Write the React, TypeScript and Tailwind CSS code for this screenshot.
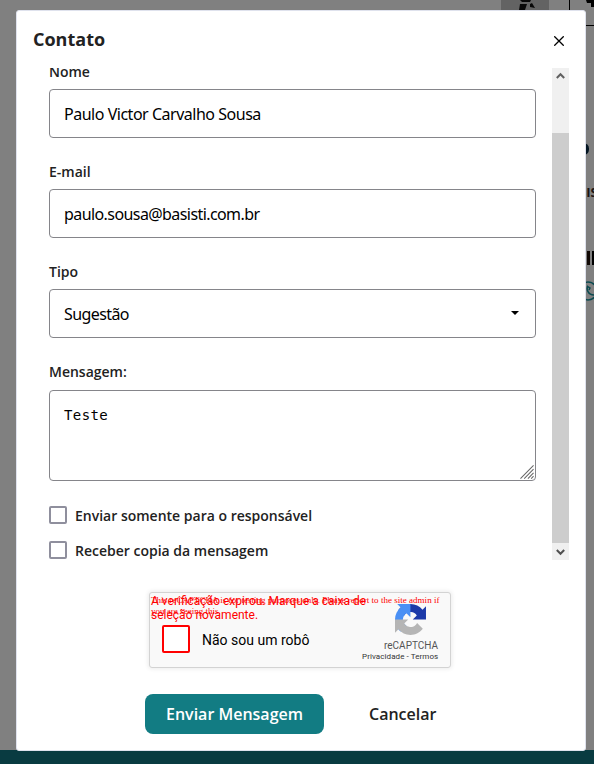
import React from "react";

function Backdrop() {
  return (
    <div className="absolute inset-0 bg-[#808080]">
      <svg className="absolute top-0 left-[501px]" width="93" height="27" viewBox="0 0 93 27">
        <rect width="48" height="12" fill="#636363" />
        <path d="M19 0H30L29 2H21Z M19 4L26 4L24 10H18Z M29 4L31 3L34 8L29 7Z" fill="#080808" />
        <path d="M68 0H69V26H68Z M69 25H93V26H69Z M85 0H93V7H90V3H86Z" fill="#000" />
      </svg>
      <div className="absolute top-[143px] left-[578px] h-[12px] w-[11px] rounded-full border-[3px] border-[#031522]" />
      <span className="absolute top-[183px] left-[579px] font-['Open_Sans',sans-serif] text-[13px] leading-[18px] font-bold text-[#1b1414]">SIS</span>
      <div className="absolute top-[251px] left-[587px] h-[14px] w-[3px] bg-[#100804]" />
      <div className="absolute top-[251px] left-[592px] h-[14px] w-[2px] bg-black" />
      <svg className="absolute top-[281px] left-[580px]" width="14" height="21" viewBox="0 0 14 21" fill="none" stroke="#0b4a50" strokeWidth="1.5">
        <circle cx="8" cy="10" r="9" />
        <path d="M8 5C6 8 8 14 14 14M7 5L10 7L9 9" />
      </svg>
      <div className="absolute inset-x-0 top-[750px] bottom-0 bg-[#093b41]" />
    </div>
  );
}

function Label({ children }: { children: React.ReactNode }) {
  return <div className="h-5 text-[14px] leading-5 font-semibold text-[#222]">{children}</div>;
}

function Field({ label, value, text, select }: { label: string; value: string; text: string; select?: boolean }) {
  return (
    <div className="h-[100px]">
      <Label>{label}</Label>
      <div className="mt-[7px] flex h-[49px] items-center justify-between rounded-[4px] border border-[#85858a] bg-white pr-4 pl-[14px] font-['Noto_Sans',sans-serif] text-[16px] leading-6 text-black">
        <span className={text}>{value}</span>
        {select && (
          <svg width="8" height="4" viewBox="0 0 8 4" className="mb-px">
            <path d="M0 0H8L4 4Z" fill="#000" />
          </svg>
        )}
      </div>
    </div>
  );
}

function Check({ label }: { label: string }) {
  return (
    <div className="flex h-[35px] items-center">
      <span className="h-[18px] w-[18px] rounded-[2px] border-2 border-[#8f8f9d] bg-white" />
      <span className="mt-[3px] ml-2 text-[14px] leading-5 font-semibold text-[#222]">{label}</span>
    </div>
  );
}

function RecaptchaLogo() {
  return (
    <svg width="31" height="31" viewBox="0 0 64 64">
      <path d="M64 31.955a33 33 0 0 0-.037-1.374V4.687l-7.159 7.159C50.945 4.674 42.033.093 32.05.093c-10.389 0-19.618 4.96-25.458 12.64l11.734 11.857a15.55 15.55 0 0 1 4.754-5.334c2.05-1.6 4.952-2.906 8.968-2.906.485 0 .86.057 1.135.163 4.976.393 9.288 3.14 11.828 7.124l-8.307 8.307L64 31.955" fill="#1c3aa9" />
      <path d="M31.862.094a33 33 0 0 0-1.373.037H4.594l7.159 7.159C4.58 13.149 0 22.061 0 32.045c0 10.388 4.96 19.618 12.64 25.458l11.857-11.734a15.55 15.55 0 0 1-5.334-4.754c-1.6-2.05-2.906-4.952-2.906-8.968 0-.485.057-.86.163-1.135.393-4.976 3.14-9.288 7.124-11.828l8.307 8.307L31.862.094" fill="#4a90f5" />
      <path d="M.001 32.045c.001.46.014.918.037 1.373v25.895l7.159-7.159c5.859 7.173 14.771 11.753 24.755 11.753 10.388 0 19.618-4.96 25.458-12.64L45.676 39.41a15.55 15.55 0 0 1-4.754 5.334c-2.05 1.6-4.952 2.906-8.968 2.906-.485 0-.86-.057-1.135-.163-4.976-.393-9.288-3.14-11.828-7.124l8.307-8.307L.001 32.045" fill="#b5b5b5" />
    </svg>
  );
}

function Captcha() {
  return (
    <div className="relative mt-[32px] ml-[132px] flex h-[76px] w-[302px] shrink-0 rounded-[3px] border border-[#d3d3d3] bg-[#f9f9f9] font-['Roboto',sans-serif] shadow-[0_0_4px_1px_rgba(0,0,0,0.08)]">
      <div className="mt-[32px] ml-[12px] h-7 w-7 rounded-[2px] border-2 border-[#f00] bg-white" />
      <span className="mt-[38px] ml-[12px] text-[14px] leading-[18px] whitespace-nowrap text-black">Não sou um robô</span>
      <div className="absolute top-[11px] left-[245px]"><RecaptchaLogo /></div>
      <span className="absolute top-[47px] left-[234px] text-[10px] leading-3 text-[#555]">reCAPTCHA</span>
      <span className="absolute top-[59px] left-[212px] text-[8px] leading-[10px] tracking-[0.08px] whitespace-nowrap text-[#333]">Privacidade - Termos</span>
      <p className="absolute top-px left-[1px] text-[12px] leading-[14px] whitespace-nowrap text-[#f00]">
        A verificação expirou. Marque a caixa de
        <br />
        seleção novamente.
      </p>
      <p className="absolute top-[2px] left-[1px] font-['Liberation_Serif',serif] text-[9px] leading-[11px] tracking-[0.02px] whitespace-nowrap text-[#f00]">
        This reCAPTCHA is for testing purposes only. Please report to the site admin if
        <br />
        you are seeing this.
      </p>
    </div>
  );
}

function Scrollbar() {
  return (
    <div className="flex h-[492px] w-[17px] flex-col bg-[#f0f0f0]">
      <svg width="17" height="17" viewBox="0 0 17 17" fill="none" stroke="#606060" strokeWidth="2">
        <path d="M4.8 10L8.5 6.2L12.2 10" />
      </svg>
      <div className="mt-[48px] h-[410px] bg-[#cdcdcd]" />
      <svg width="17" height="17" viewBox="0 0 17 17" fill="none" stroke="#505050" strokeWidth="2">
        <path d="M4.8 7L8.5 10.8L12.2 7" />
      </svg>
    </div>
  );
}

export default function App() {
  return (
    <div className="relative h-[764px] w-[594px] overflow-hidden font-['Open_Sans',sans-serif]">
      <Backdrop />
      <div className="relative mt-[10px] ml-4 flex h-[741px] w-[570px] flex-col rounded-[3px] border border-[#dfe2ed] bg-white">
        <header className="flex h-[57px] shrink-0 justify-between pr-[21px] pl-[16px]">
          <h1 className="mt-[16px] text-[18px] leading-6 font-bold text-[#222]">Contato</h1>
          <svg className="mt-[25px]" width="10" height="10" viewBox="0 0 10 10" stroke="#000" strokeWidth="1.3">
            <path d="M0.3 0.3L9.7 9.7M9.7 0.3L0.3 9.7" />
          </svg>
        </header>
        <div className="flex h-[492px] shrink-0 justify-between overflow-hidden pr-4 pl-[32px]">
          <div className="-mt-[6px] w-[487px]">
            <Field label="Nome" value="Paulo Victor Carvalho Sousa" text="tracking-[-0.48px]" />
            <Field label="E-mail" value="paulo.sousa@basisti.com.br" text="tracking-[-0.58px]" />
            <Field label="Tipo" value="Sugestão" text="tracking-[-0.6px]" select />
            <Label>Mensagem:</Label>
            <div className="mt-2 flex h-[91px] justify-between rounded-[4px] border border-[#85858a] bg-white pt-3 pl-[14px] font-['DejaVu_Sans_Mono',monospace] text-[14px] leading-6 tracking-[0.4px] text-black">
              Teste
              <svg className="mr-px mb-px self-end" width="14" height="14" viewBox="0 0 15 15" stroke="#666" strokeWidth="1.1">
                <path d="M0.5 14.5L14.5 0.5M4.5 14.5L14.5 4.5M8.5 14.5L14.5 8.5M12 14.5L14.5 12" />
              </svg>
            </div>
            <div className="mt-[16px]">
              <Check label="Enviar somente para o responsável" />
              <Check label="Receber copia da mensagem" />
            </div>
          </div>
          <Scrollbar />
        </div>
        <Captcha />
        <footer className="mt-[26px] ml-[128px] flex h-10 items-center text-[16px] font-semibold">
          <button className="h-10 w-[179px] rounded-lg bg-[#127c83] text-white">Enviar Mensagem</button>
          <button className="ml-[45px] text-[#222]">Cancelar</button>
        </footer>
      </div>
    </div>
  );
}
